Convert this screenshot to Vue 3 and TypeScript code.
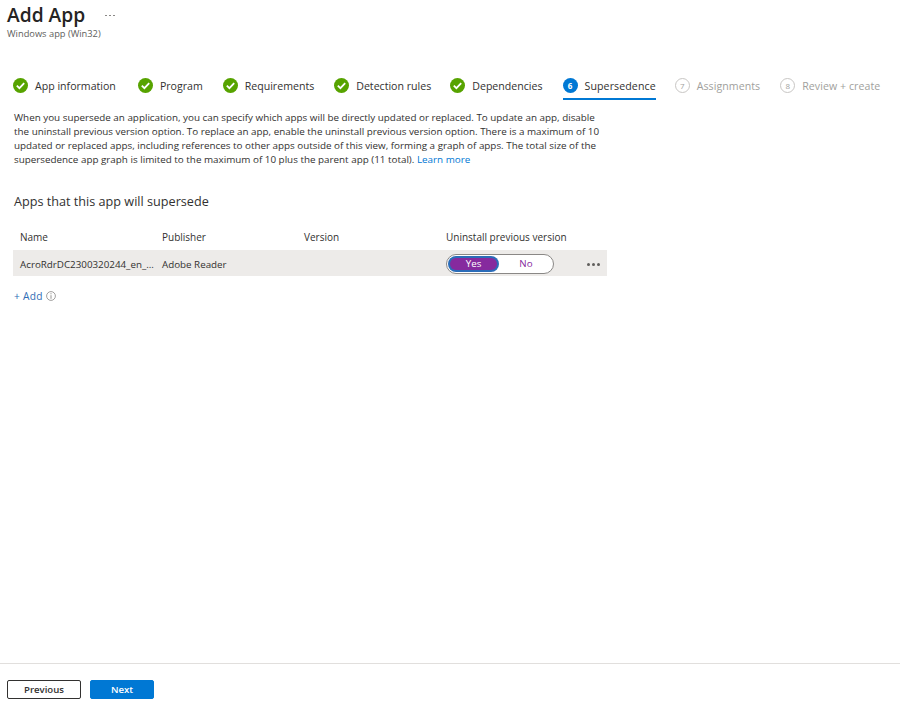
<script setup lang="ts">
interface Step { label: string; state: 'done' | 'current' | 'todo'; n?: number; gap: number }
const steps: Step[] = [
  { label: 'App information', state: 'done', gap: 22 },
  { label: 'Program', state: 'done', gap: 20 },
  { label: 'Requirements', state: 'done', gap: 20 },
  { label: 'Detection rules', state: 'done', gap: 19 },
  { label: 'Dependencies', state: 'done', gap: 20 },
  { label: 'Supersedence', state: 'current', n: 6, gap: 19 },
  { label: 'Assignments', state: 'todo', n: 7, gap: 20 },
  { label: 'Review + create', state: 'todo', n: 8, gap: 0 },
]
</script>

<template>
  <div class="page">
    <header class="head">
      <div class="title-row">
        <h1>Add App</h1>
        <span class="more"><i></i><i></i><i></i></span>
      </div>
      <div class="sub">Windows app (Win32)</div>
    </header>

    <nav class="steps">
      <div v-for="s in steps" :key="s.label" class="step" :class="s.state" :style="{ marginRight: s.gap + 'px' }">
        <svg v-if="s.state === 'done'" class="ic" viewBox="0 0 15 15">
          <circle cx="7.5" cy="7.5" r="7.5" fill="#57a300" />
          <path d="M3.8 7.6 6.4 10.2 11.2 5.2" fill="none" stroke="#fff" stroke-width="1.8" />
        </svg>
        <span v-else class="num">{{ s.n }}</span>
        <span class="lbl">{{ s.label }}</span>
      </div>
    </nav>

    <main class="body">
      <p class="desc">
        When you supersede an application, you can specify which apps will be directly updated or replaced. To update an app, disable<br />
        the uninstall previous version option. To replace an app, enable the uninstall previous version option. There is a maximum of 10<br />
        updated or replaced apps, including references to other apps outside of this view, forming a graph of apps. The total size of the<br />
        supersedence app graph is limited to the maximum of 10 plus the parent app (11 total). <a>Learn more</a>
      </p>
      <h2>Apps that this app will supersede</h2>
      <div class="table">
        <div class="tr th">
          <span>Name</span><span>Publisher</span><span>Version</span><span>Uninstall previous version</span>
        </div>
        <div class="tr row">
          <span>AcroRdrDC2300320244_en_...</span>
          <span>Adobe Reader</span>
          <span></span>
          <span class="toggle-cell">
            <span class="toggle">
              <span class="opt yes">Yes</span>
              <span class="opt no">No</span>
            </span>
            <span class="dots"><i></i><i></i><i></i></span>
          </span>
        </div>
      </div>
      <div class="add">
        <a>+ Add</a>
        <svg class="info" viewBox="0 0 10 10">
          <circle cx="5" cy="5" r="4.4" fill="none" stroke="#8a8886" stroke-width="0.8" />
          <path d="M5 4.2V7.8M5 2.2V3.3" stroke="#8a8886" stroke-width="0.9" />
        </svg>
      </div>
    </main>

    <footer class="foot">
      <button class="btn prev">Previous</button>
      <button class="btn next">Next</button>
    </footer>
  </div>
</template>

<style>
html, body { margin: 0; background: #fff; }
</style>

<style scoped>
.page {
  width: 900px;
  height: 708px;
  display: flex;
  flex-direction: column;
  overflow: hidden;
  font-family: "Open Sans", "Noto Sans", sans-serif;
  color: #323130;
  font-size: 10.2px;
  box-sizing: border-box;
}
.head { padding: 3px 0 0 7px; height: 73px; box-sizing: border-box; }
.title-row { display: flex; align-items: center; height: 24px; }
h1 { margin: 0; font-size: 19.2px; font-weight: 600; color: #252423; line-height: 24px; }
.more { margin-left: 20px; display: flex; gap: 2px; }
.more i { width: 2px; height: 1px; background: #8a8886; }
.sub { font-size: 9.3px; color: #605e5c; line-height: 13px; }
.steps { display: flex; height: 27px; padding-left: 13px; box-sizing: border-box; }
.step {
  display: flex; align-items: center; height: 27px; box-sizing: border-box;
  font-size: 10.6px; white-space: nowrap; border-bottom: 2px solid transparent;
}
.ic { width: 15px; height: 15px; flex: none; margin-right: 7px; }
.num {
  width: 15px; height: 15px; border-radius: 50%; flex: none; margin-right: 7px;
  display: flex; align-items: center; justify-content: center; font-size: 8px; box-sizing: border-box;
}
.current { border-bottom-color: #0078d4; }
.current .num { background: #0078d4; color: #fff; font-weight: 700; }
.current .lbl { color: #323130; letter-spacing: 0.1px; }
.todo { color: #a19f9d; }
.todo .lbl { letter-spacing: 0.06px; }
.todo .num { border: 1px solid #c8c6c4; color: #a19f9d; }
.body { flex: 1; padding: 10px 0 0 14px; }
.desc { margin: 0; line-height: 14px; font-size: 9.85px; white-space: nowrap; color: #323130; }
a { color: #0078d4; }
h2 { margin: 26px 0 0; font-size: 12.65px; font-weight: 500; line-height: 18px; color: #323130; }
.table { margin: 20px 0 0 -1px; width: 594px; }
.tr { display: grid; grid-template-columns: 142px 142px 142px 1fr; padding-left: 7px; font-size: 9.8px; align-items: center; box-sizing: border-box; }
.th { height: 20px; padding-bottom: 6px; font-size: 10px; }
.th span { color: #323130; font-weight: 500; }
.row { height: 26px; padding-top: 2px; background: #edebe9; }
.row > span { white-space: nowrap; }
.toggle-cell { display: flex; align-items: center; }
.toggle {
  display: flex; width: 108px; height: 20px; margin-left: 0; border: 1px solid #8a8886; border-radius: 10px;
  background: #fff; box-sizing: border-box; align-items: center; padding-left: 1px;
}
.opt { text-align: center; line-height: 12px; font-size: 9.8px; }
.yes {
  background: #862a9e; color: #fff; border-radius: 7px; height: 12px; width: 47px;
  box-shadow: 0 0 0 2px #2b6cb8; margin-left: 2px; flex: none;
}
.no { color: #862a9e; flex: 1; padding-left: 2px; }
.dots { display: flex; gap: 2px; margin-left: 33px; }
.dots i { width: 3px; height: 3px; border-radius: 50%; background: #605e5c; }
.add { display: flex; align-items: center; margin-top: 13px; font-size: 10.2px; height: 14px; }
.add a { color: #2f6db5; letter-spacing: 0.3px; }
.info { width: 10px; height: 10px; margin-left: 3px; }
.foot {
  height: 28px; border-top: 1px solid #e1dfdd; display: flex; padding: 16px 0 0 7px; gap: 9px; box-sizing: content-box;
}
.btn {
  height: 19px; border-radius: 2px; font-family: inherit; font-size: 9.6px; font-weight: 600; padding: 0; box-sizing: border-box; line-height: 1;
}
.prev { width: 74px; background: #fff; border: 1px solid #323130; color: #323130; }
.next { width: 64px; background: #0078d4; border: 1px solid #0078d4; color: #fff; }
</style>
